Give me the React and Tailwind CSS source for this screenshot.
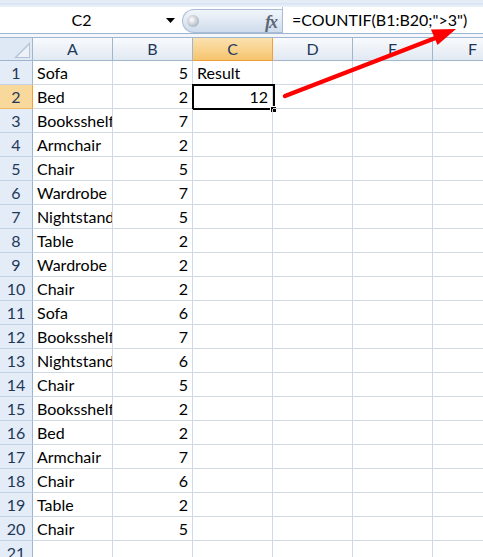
import React from 'react'

const rows = [
  ['Sofa', 5, 'Result'],
  ['Bed', 2, 12],
  ['Booksshelf', 7],
  ['Armchair', 2],
  ['Chair', 5],
  ['Wardrobe', 7],
  ['Nightstand', 5],
  ['Table', 2],
  ['Wardrobe', 2],
  ['Chair', 2],
  ['Sofa', 6],
  ['Booksshelf', 7],
  ['Nightstand', 6],
  ['Chair', 5],
  ['Booksshelf', 2],
  ['Bed', 2],
  ['Armchair', 7],
  ['Chair', 6],
  ['Table', 2],
  ['Chair', 5],
  [],
  [],
]

const cols = ['A', 'B', 'C', 'D', 'E', 'F']

function Cell({ value, active }) {
  const isNum = typeof value === 'number'
  return (
    <div
      className={`relative border-r border-b border-[#d0d7e5] px-[4px] leading-[23px] whitespace-nowrap ${
        isNum ? 'text-right' : 'text-left'
      } ${active ? '' : 'overflow-hidden'}`}
    >
      {value}
      {active && (
        <>
          <div className="absolute -left-[1px] -top-[1px] w-[83px] h-[26px] border-2 border-black" />
          <div className="absolute left-[77px] top-[21px] w-[7px] h-[7px] bg-black border border-white" />
        </>
      )}
    </div>
  )
}

export default function App() {
  return (
    <div className="relative w-[483px] h-[557px] overflow-hidden bg-white text-[16px] text-black font-['Lato','Open_Sans',sans-serif]">
      {/* ribbon edge */}
      <div className="h-[7px] bg-linear-to-b from-[#d5e2f2] to-[#eef3fa] border-t-[3px] border-[#e4ecf6]" />

      {/* name box + formula bar */}
      <div className="flex h-[27px] border-b border-[#9eb6ce] bg-white">
        <div className="relative w-[182px] flex items-center">
          <span className="w-[163px] text-center">C2</span>
          <svg className="absolute left-[166px] top-[11px]" width="9" height="5" viewBox="0 0 9 5">
            <polygon points="0,0 9,0 4.5,5" fill="#000" />
          </svg>
        </div>
        <div className="relative mt-[2px] w-[100px] h-[24px] rounded-l-full border border-r-0 border-[#a9bcd5] bg-linear-to-b from-[#f2f6fb] to-[#cfdcec]">
          <div className="absolute left-[4px] top-[5px] w-[12px] h-[12px] rounded-full bg-[radial-gradient(circle_at_40%_40%,#ffffff,#8f9aa7)]" />
          <span className="absolute right-[6px] top-[-1px] font-['Liberation_Serif',serif] italic font-bold text-[18px] text-[#5d6876] tracking-[-2px]">
            fx
          </span>
        </div>
        <div className="flex-1 border-l border-[#a9bcd5] pl-[9px] leading-[26px] whitespace-nowrap overflow-hidden">
          =COUNTIF(B1:B20;"&gt;3")
        </div>
      </div>
      <div className="h-[4px] bg-[#f3f6fb] border-b border-[#9eb6ce]" />

      {/* sheet grid */}
      <div className="grid grid-cols-[33px_80px_80px_80px_80px_80px_80px] grid-rows-[23px] auto-rows-[24px]">
        <div className="relative bg-[#dfe8f5] border-r border-b border-[#9eb6ce]">
          <svg className="absolute right-[2px] bottom-[2px]" width="16" height="16" viewBox="0 0 16 16">
            <polygon points="16,0 16,16 0,16" fill="#b3c3d8" />
            <polygon points="15,3 15,15 3,15" fill="#eef2f7" />
          </svg>
        </div>
        {cols.map((c) =>
          c === 'C' ? (
            <div
              key={c}
              className="text-center leading-[22px] text-[#1e395b] bg-linear-to-b from-[#fbe2b0] to-[#f6c46c] border-r border-b border-[#f0a038]"
            >
              {c}
            </div>
          ) : (
            <div
              key={c}
              className="text-center leading-[22px] text-[#1e395b] bg-linear-to-b from-[#f8fafd] to-[#e2e9f2] border-r border-b border-[#9eb6ce]"
            >
              {c}
            </div>
          )
        )}

        {rows.map((r, i) => (
          <React.Fragment key={i}>
            <div
              className={`text-center leading-[23px] text-[#1e395b] border-b ${
                i === 1
                  ? 'bg-[#f8d89b] border-r border-r-[#f0a038] border-b-[#f0b860]'
                  : 'bg-[#e4ecf7] border-r border-r-[#9eb6ce] border-b-[#c4d2e5]'
              }`}
            >
              {i + 1}
            </div>
            <Cell value={r[0]} />
            <Cell value={r[1]} />
            <Cell value={r[2]} active={i === 1} />
            <Cell />
            <Cell />
            <Cell />
          </React.Fragment>
        ))}
      </div>

      {/* annotation arrow */}
      <svg className="absolute inset-0 pointer-events-none" width="483" height="557" viewBox="0 0 483 557">
        <line x1="285" y1="96" x2="438" y2="37" stroke="#ff0000" strokeWidth="4.5" strokeLinecap="round" />
        <polygon points="456,29 437.5,45 431,29.5" fill="#ff0000" />
      </svg>
    </div>
  )
}
